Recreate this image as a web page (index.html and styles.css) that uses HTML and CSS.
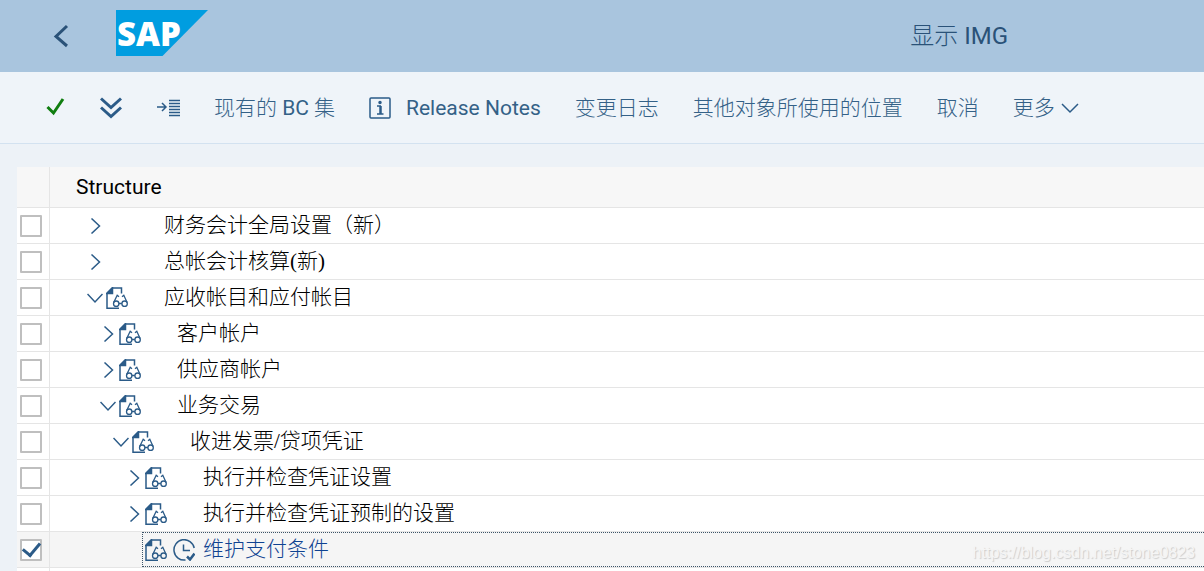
FILE: index.html
```html
<!DOCTYPE html>
<html lang="zh-CN">
<head>
    <meta charset="UTF-8">
    <title>显示 IMG</title>
    <link rel="stylesheet" href="styles.css">
</head>
<body>
    <svg class="sprite" aria-hidden="true">
        <symbol id="right" viewBox="0 0 16 16"><path d="M4.500 0.500L12.500 8L4.500 15.500"/></symbol>
        <symbol id="down" viewBox="0 0 16 16"><path d="M0.500 4L8 12L15.500 4"/></symbol>
        <symbol id="doc" viewBox="0 0 22 22">
            <path d="M6 1H15.500V6.500M1 6V21.200H13"/>
            <path class="solid" d="M0.500 6.500L6.500 0.500V6.500Z"/>
            <g class="thin">
                <circle cx="10.200" cy="16.700" r="2.700"/>
                <circle cx="18.600" cy="16.700" r="2.700"/>
                <path d="M12.900 16.500H15.900M7.700 15.500L11.200 8.300L13 9.800M21.100 15.500L17.800 8.300L16 9.800"/>
            </g>
        </symbol>
        <symbol id="clock" viewBox="0 0 22 22">
            <path d="M21.200 9A10.200 10.200 0 1 0 12.500 21M10.500 5.500V11.500H17"/>
            <path class="thick" d="M14 17.500L17 20.500L21.500 14.500"/>
        </symbol>
    </svg>

    <div class="page">
        <header class="shell">
            <button class="back" aria-label="Back">
                <svg width="16" height="24" viewBox="0 0 16 24"><path d="M14 2L3 12.500L14 22"/></svg>
            </button>
            <svg class="logo" width="92" height="46" viewBox="0 0 92 46">
                <path d="M0 0H92L46.500 46H0Z"/>
                <text x="1" y="36">SAP</text>
            </svg>
            <h1>显示 <span class="latin">IMG</span></h1>
        </header>

        <nav class="toolbar">
            <button class="ok" aria-label="OK">
                <svg width="20" height="20" viewBox="0 0 20 20"><path d="M1.500 9L7.500 15L17 1"/></svg>
            </button>
            <button class="expand" aria-label="Expand">
                <svg width="22" height="22" viewBox="0 0 22 22"><path d="M1 1.500L11 10.500L21 1.500M1 10.500L11 19.500L21 10.500"/></svg>
            </button>
            <button aria-label="Position">
                <svg width="24" height="20" viewBox="0 0 24 20"><path d="M1 9H10M6 5L10 9L6 13M13 2.500H24M13 5.500H24M13 8.500H24M13 11.500H24M13 14.500H24M13 17.500H24"/></svg>
            </button>
            <button>现有的&nbsp;<span class="latin">BC</span>&nbsp;集</button>
            <button class="notes">
                <svg width="22" height="22" viewBox="0 0 22 22">
                    <rect x="1" y="1" width="20" height="20" rx="1"/>
                    <circle class="solid" cx="11" cy="5.500" r="1"/>
                    <path class="thick" d="M11.500 9V17"/>
                    <path d="M8 9H12M8 17H14.500"/>
                </svg>
                <span class="latin">Release Notes</span>
            </button>
            <button>变更日志</button>
            <button>其他对象所使用的位置</button>
            <button>取消</button>
            <button class="more">更多
                <svg width="18" height="18" viewBox="0 0 18 18"><path d="M1 5L9 13L17 5"/></svg>
            </button>
        </nav>

        <main>
            <table>
                <thead>
                    <tr><th class="select"></th><th>Structure</th></tr>
                </thead>
                <tbody>
                    <tr>
                        <td class="select"><input type="checkbox" id="n1"></td>
                        <td><div class="node">
                            <button class="toggle" aria-label="Expand"><svg><use href="#right"/></svg></button>
                            <span class="icons"></span>
                            <label for="n1">财务会计全局设置（新）</label>
                        </div></td>
                    </tr>
                    <tr>
                        <td class="select"><input type="checkbox" id="n2"></td>
                        <td><div class="node">
                            <button class="toggle" aria-label="Expand"><svg><use href="#right"/></svg></button>
                            <span class="icons"></span>
                            <label for="n2">总帐会计核算(新)</label>
                        </div></td>
                    </tr>
                    <tr>
                        <td class="select"><input type="checkbox" id="n3"></td>
                        <td><div class="node">
                            <button class="toggle" aria-label="Collapse"><svg><use href="#down"/></svg></button>
                            <span class="icons"><svg><use href="#doc"/></svg></span>
                            <label for="n3">应收帐目和应付帐目</label>
                        </div></td>
                    </tr>
                    <tr>
                        <td class="select"><input type="checkbox" id="n4"></td>
                        <td><div class="node level-1">
                            <button class="toggle" aria-label="Expand"><svg><use href="#right"/></svg></button>
                            <span class="icons"><svg><use href="#doc"/></svg></span>
                            <label for="n4">客户帐户</label>
                        </div></td>
                    </tr>
                    <tr>
                        <td class="select"><input type="checkbox" id="n5"></td>
                        <td><div class="node level-1">
                            <button class="toggle" aria-label="Expand"><svg><use href="#right"/></svg></button>
                            <span class="icons"><svg><use href="#doc"/></svg></span>
                            <label for="n5">供应商帐户</label>
                        </div></td>
                    </tr>
                    <tr>
                        <td class="select"><input type="checkbox" id="n6"></td>
                        <td><div class="node level-1">
                            <button class="toggle" aria-label="Collapse"><svg><use href="#down"/></svg></button>
                            <span class="icons"><svg><use href="#doc"/></svg></span>
                            <label for="n6">业务交易</label>
                        </div></td>
                    </tr>
                    <tr>
                        <td class="select"><input type="checkbox" id="n7"></td>
                        <td><div class="node level-2">
                            <button class="toggle" aria-label="Collapse"><svg><use href="#down"/></svg></button>
                            <span class="icons"><svg><use href="#doc"/></svg></span>
                            <label for="n7">收进发票/贷项凭证</label>
                        </div></td>
                    </tr>
                    <tr>
                        <td class="select"><input type="checkbox" id="n8"></td>
                        <td><div class="node level-3">
                            <button class="toggle" aria-label="Expand"><svg><use href="#right"/></svg></button>
                            <span class="icons"><svg><use href="#doc"/></svg></span>
                            <label for="n8">执行并检查凭证设置</label>
                        </div></td>
                    </tr>
                    <tr>
                        <td class="select"><input type="checkbox" id="n9"></td>
                        <td><div class="node level-3">
                            <button class="toggle" aria-label="Expand"><svg><use href="#right"/></svg></button>
                            <span class="icons"><svg><use href="#doc"/></svg></span>
                            <label for="n9">执行并检查凭证预制的设置</label>
                        </div></td>
                    </tr>
                    <tr class="selected">
                        <td class="select"><input type="checkbox" id="n10" checked></td>
                        <td><div class="node focus">
                            <span class="icons"><svg><use href="#doc"/></svg><svg><use href="#clock"/></svg></span>
                            <label for="n10">维护支付条件</label>
                        </div></td>
                    </tr>
                    <tr><td class="select"></td><td></td></tr>
                </tbody>
            </table>
        </main>
        <span class="watermark">https://blog.csdn.net/stone0823</span>
    </div>
</body>
</html>
```
FILE: styles.css
```css
* {
    box-sizing: border-box;
}
body {
    margin: 0;
    background-color: #edf2f7;
    font-family: Roboto, "Noto Sans CJK SC", sans-serif;
    font-size: 21px;
    color: #000;
}
.page {
    position: relative;
    height: 100vh;
    overflow: hidden;
}
.sprite {
    position: absolute;
    width: 0;
    height: 0;
}
svg {
    display: block;
    flex: none;
    fill: none;
    stroke: #2b5b88;
    stroke-width: 1.5;
}
.solid {
    fill: #2b5b88;
}
.thin {
    stroke-width: 1.3;
}
.thick {
    stroke-width: 2.5;
}
button {
    display: flex;
    align-items: center;
    padding: 0;
    border: none;
    background: none;
    font: inherit;
    font-weight: 300;
    line-height: 24px;
    color: #346187;
    white-space: nowrap;
    cursor: pointer;
}
.latin {
    font-weight: 400;
}
.shell {
    display: flex;
    align-items: center;
    height: 72px;
    padding: 0 196px 6px 53px;
    background-color: #a9c5de;
}
.back {
    margin-top: 6px;
}
.back svg {
    stroke: #2a5278;
    stroke-width: 3;
}
.logo {
    margin-left: 47px;
}
.logo path {
    fill: #009de0;
    stroke: none;
}
.logo text {
    fill: #fff;
    stroke: none;
    font-family: "Open Sans", sans-serif;
    font-size: 33px;
    font-weight: 800;
}
h1 {
    margin: 6px 0 0 auto;
    font-size: 24px;
    font-weight: 300;
    line-height: 24px;
    color: #2a5278;
}
.toolbar {
    display: flex;
    align-items: center;
    gap: 34px;
    height: 72px;
    padding-left: 46px;
    background-color: #eff4f9;
    border-bottom: 1px solid #d3e2f0;
}
.ok svg {
    stroke: #107e10;
    stroke-width: 3;
}
.expand svg {
    stroke-width: 3;
}
.notes {
    gap: 15px;
}
.more {
    gap: 6px;
}
main {
    margin: 23px 0 0 17px;
    background-color: #fff;
}
table {
    width: 100%;
    border-collapse: separate;
    border-spacing: 0;
    table-layout: fixed;
}
th, td {
    height: 36px;
    padding: 0;
    border-bottom: 1px solid #e5e5e5;
}
th {
    height: 41px;
    padding-left: 26px;
    background-color: #f7f7f7;
    font-weight: 400;
    text-align: left;
}
.select {
    width: 33px;
    padding: 0 0 0 3px;
    border-right: 1px solid #e5e5e5;
}
.selected td {
    background-color: #f5f5f5;
}
input {
    display: grid;
    place-items: center;
    appearance: none;
    width: 22px;
    height: 22px;
    margin: 0;
    border: 2px solid #bfbfbf;
    border-radius: 1px;
    background-color: #fff;
}
input:checked::after {
    content: "";
    width: 8px;
    height: 14px;
    margin-top: -4px;
    border: solid #2b5b88;
    border-width: 0 3px 3px 0;
    transform: rotate(40deg);
}
.node {
    display: flex;
    align-items: center;
    height: 35px;
    padding-left: 37px;
    line-height: 35px;
}
.level-1 {
    padding-left: 50px;
}
.level-2 {
    padding-left: 63px;
}
.level-3 {
    padding-left: 76px;
}
.toggle {
    margin-right: 3px;
}
.toggle svg {
    width: 16px;
    height: 16px;
}
.icons {
    display: flex;
    gap: 6px;
    width: 58px;
}
.icons svg {
    width: 22px;
    height: 22px;
}
.node label {
    font-family: "Liberation Serif", "Noto Sans CJK SC", serif;
    font-weight: 300;
}
.focus {
    margin-left: 92px;
    padding-left: 2px;
    border: 1px dotted #3c5468;
    border-right: none;
}
.focus label {
    color: #0f4391;
}
.watermark {
    position: absolute;
    right: 9px;
    bottom: 9px;
    font-family: "Liberation Sans", sans-serif;
    font-size: 16px;
    color: #f5f5f5;
    text-shadow: 1px 1px 1px #ccc;
}
```
